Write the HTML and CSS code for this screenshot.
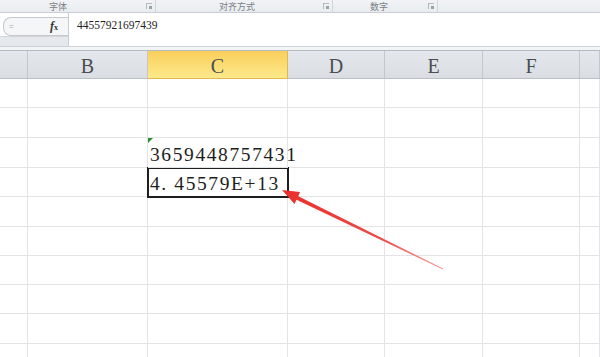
FILE: index.html
```html
<!DOCTYPE html>
<html lang="zh-CN">
<head>
    <meta charset="UTF-8">
    <title>Excel 数字显示</title>
    <link rel="stylesheet" href="styles.css">
</head>
<body>
<div class="screen">
    <div class="ribbon">
        <div class="group g1"><span class="label">字体</span><span class="launcher"></span></div>
        <div class="group g2"><span class="label">对齐方式</span><span class="launcher"></span></div>
        <div class="group g3"><span class="label">数字</span><span class="launcher"></span></div>
    </div>

    <div class="fbar">
        <div class="namebox">
            <div class="pill"><span class="eq">=</span><span class="fx"><i>f</i><small>x</small></span></div>
            <div class="under"></div>
        </div>
        <div class="formula">44557921697439</div>
    </div>
    <div class="spacer"></div>

    <table class="sheet">
        <colgroup>
            <col class="ca"><col class="cb"><col class="cc"><col class="cd"><col class="ce"><col class="cf"><col class="cg">
        </colgroup>
        <tr class="head">
            <th></th><th>B</th><th class="sel">C</th><th>D</th><th>E</th><th>F</th><th></th>
        </tr>
        <tr class="r29"><td></td><td></td><td></td><td></td><td></td><td></td><td></td></tr>
        <tr class="r30"><td></td><td></td><td></td><td></td><td></td><td></td><td></td></tr>
        <tr class="r30"><td></td><td></td><td class="num flag">3659448757431</td><td></td><td></td><td></td><td></td></tr>
        <tr class="r29"><td></td><td></td><td class="num active">4.&nbsp;45579E+13</td><td></td><td></td><td></td><td></td></tr>
        <tr class="r30"><td></td><td></td><td></td><td></td><td></td><td></td><td></td></tr>
        <tr class="r29"><td></td><td></td><td></td><td></td><td></td><td></td><td></td></tr>
        <tr class="r29"><td></td><td></td><td></td><td></td><td></td><td></td><td></td></tr>
        <tr class="r29"><td></td><td></td><td></td><td></td><td></td><td></td><td></td></tr>
        <tr class="r30"><td></td><td></td><td></td><td></td><td></td><td></td><td></td></tr>
        <tr class="r30"><td></td><td></td><td></td><td></td><td></td><td></td><td></td></tr>
    </table>

    <!-- 红色箭头指向 C 列的科学计数 -->
    <svg class="arrow" width="600" height="357" viewBox="0 0 600 357">
        <defs>
            <linearGradient id="fade" x1="283" y1="191" x2="443" y2="269" gradientUnits="userSpaceOnUse">
                <stop offset="0" stop-color="#e8302c"/>
                <stop offset="0.6" stop-color="#ee4a44"/>
                <stop offset="1" stop-color="#f7a0a0"/>
            </linearGradient>
        </defs>
        <polygon fill="url(#fade)" points="282,190 300,192 298.3,196.2 443.2,268.6 442.8,269.4 296.5,199.8 294.5,204"/>
    </svg>
</div>
</body>
</html>
```
FILE: styles.css
```css
*{margin: 0;padding: 0;box-sizing: border-box;}
body{background: #fff;}
.screen{position: relative;width: 600px;height: 357px;overflow: hidden;font-family: "Liberation Serif", serif;}

/* 功能区底部那一条 */
.ribbon{display: flex;height: 13px;background: linear-gradient(#f1f3f6, #e9ecf0);border-bottom: 1px solid #c9cdd3;}
.group{position: relative;display: flex;align-items: center;height: 12px;border-right: 1px solid #d3d7dc;}
.g1{width: 156px;}
.g2{width: 177px;}
.g3{width: 105px;}
.label{font-family: "Noto Sans CJK SC", sans-serif;font-size: 9px;line-height: 11px;color: #7a7f86;}
.g1 .label{margin-left: 49px;}
.g2 .label{margin-left: 63px;}
.g3 .label{margin-left: 37px;}
.launcher{position: absolute;right: 3px;top: 3px;width: 6px;height: 6px;border-left: 1px solid #b5bac0;border-top: 1px solid #b5bac0;}
.launcher::after{content: "";position: absolute;right: 0;bottom: 0;width: 3px;height: 3px;background: #9ca1a8;}

/* 编辑栏 */
.fbar{display: flex;height: 34px;border-bottom: 1px solid #d0d4d9;background: #fff;}
.namebox{width: 69px;border-right: 1px solid #c9cdd2;display: flex;flex-direction: column;}
.pill{display: flex;align-items: center;justify-content: space-between;height: 19px;margin-top: 4px;margin-left: 3px;padding: 0 10px 0 5px;border: 1px solid #c5c9ce;border-right: none;border-radius: 8px 0 0 8px;background: #f5f6f8;}
.eq{font-family: "Liberation Sans", sans-serif;font-size: 8px;color: #a3a7ad;}
.fx{font-family: "Liberation Serif", serif;font-size: 12px;font-weight: bold;color: #333;}
.fx small{font-size: 8px;}
.under{flex: 1;background: #e5e8ec;border-top: 1px solid #d3d6db;}
.formula{padding: 6px 0 0 8px;font-size: 11.5px;color: #222;}
.spacer{height: 3px;background: #f3f4f6;}

/* 表格区域 */
.sheet{border-collapse: separate;border-spacing: 0;table-layout: fixed;width: 600px;border-top: 1px solid #b4bac2;}
.ca{width: 28px;}
.cb{width: 120px;}
.cc{width: 140px;}
.cd{width: 97px;}
.ce{width: 98px;}
.cf{width: 97px;}
.cg{width: 20px;}
th{height: 28px;background: linear-gradient(#e4e7eb, #dadee3);border-right: 1px solid #c2c7cd;border-bottom: 1px solid #b9bfc6;font-weight: normal;font-size: 20px;color: #4a4d52;line-height: 1;padding-top: 2px;}
th.sel{background: linear-gradient(#f9cf5c, #fde98b);border-right-color: #e0b94d;border-bottom-color: #e0b94d;}
td{border-right: 1px solid #e3e4e5;border-bottom: 1px solid #e3e4e5;}
.r29{height: 29px;}
.r30{height: 30px;}
.num{white-space: nowrap;overflow: visible;vertical-align: bottom;padding: 0 0 3px 2px;font-size: 19.5px;letter-spacing: 1.6px;line-height: 1;color: #1e1e1e;}
.flag{position: relative;}
.flag::before{content: "";position: absolute;left: 0;top: 0;border-top: 5px solid #2e8b2e;border-right: 5px solid transparent;}
.active{outline: 2px solid #1e1e1e;outline-offset: -1px;}

.arrow{position: absolute;left: 0;top: 0;pointer-events: none;}
```
